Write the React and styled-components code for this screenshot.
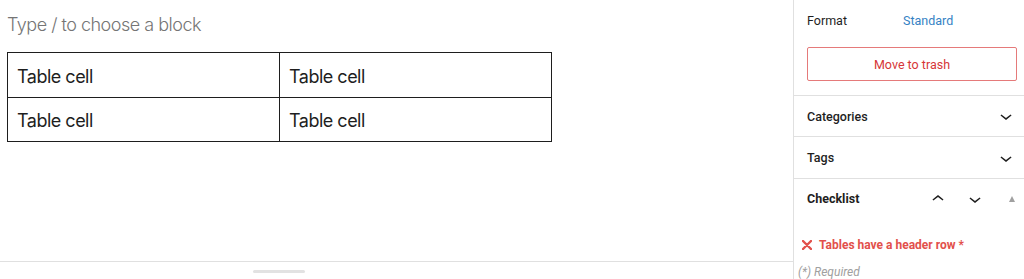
import React from "react";
import styled, { createGlobalStyle } from "styled-components";

const GlobalStyle = createGlobalStyle`
  html, body {
    margin: 0;
    padding: 0;
    background: #fff;
    overflow: hidden;
  }
  * { box-sizing: border-box; }
`;

const Page = styled.div`
  display: flex;
  width: 1024px;
  height: 279px;
  overflow: hidden;
`;

const Editor = styled.div`
  width: 793px;
  display: flex;
  flex-direction: column;
`;

const Canvas = styled.div`
  height: 262px;
  border-bottom: 1px solid #e0e0e0;
  padding: 13px 0 0 7px;
  font-family: Inter, "Noto Sans", sans-serif;
`;

const Placeholder = styled.div`
  font-size: 18px;
  line-height: 24px;
  font-weight: 300;
  color: #757575;
  letter-spacing: -0.5px;
`;

const Table = styled.table`
  margin-top: 15px;
  width: 545px;
  border-collapse: collapse;
  table-layout: fixed;
`;

const Cell = styled.td`
  border: 1px solid #1e1e1e;
  height: 44.5px;
  padding: 3px 9px 0;
  font-size: 18px;
  font-weight: 400;
  color: #1e1e1e;
  letter-spacing: -0.5px;
`;

const Footer = styled.div`
  flex: 1;
  padding: 8px 0 0 253px;
`;

const Handle = styled.div`
  width: 52px;
  height: 3px;
  border-radius: 2px;
  background: #e2e2e2;
`;

const Sidebar = styled.div`
  flex: 1;
  border-left: 1px solid #e0e0e0;
  font-family: Roboto, "Liberation Sans", Arial, sans-serif;
  font-size: 12.5px;
  color: #1e1e1e;
  display: flex;
  flex-direction: column;
`;

const Panel = styled.div`
  padding: 10px 7px 14px 13px;
  border-bottom: 1px solid #e0e0e0;
`;

const FormatRow = styled.div`
  display: flex;
  align-items: center;
  height: 20px;
  margin-bottom: 17px;
`;

const Label = styled.span`
  width: 96px;
`;

const LinkText = styled.span`
  color: #3582c4;
`;

const TrashButton = styled.div`
  height: 34px;
  border: 1px solid #e57a7a;
  border-radius: 2px;
  color: #d63638;
  display: flex;
  align-items: center;
  justify-content: center;
`;

const SectionHeader = styled.div`
  height: ${(p) => p.$h}px;
  display: flex;
  align-items: center;
  padding: 0 ${(p) => p.$pr}px 0 13px;
  border-bottom: ${(p) => (p.$noBorder ? "none" : "1px solid #e0e0e0")};
  font-weight: ${(p) => (p.$bold ? 700 : 500)};
`;

const Title = styled.span`
  flex: 1;
  font-weight: inherit;
`;

const IconSlot = styled.span`
  display: flex;
  align-items: center;
  justify-content: center;
  width: ${(p) => p.$w || 24}px;
  margin-left: ${(p) => p.$ml || 0}px;
  color: #1e1e1e;
`;

const Triangle = styled.span`
  width: 0;
  height: 0;
  border-left: 3.5px solid transparent;
  border-right: 3.5px solid transparent;
  border-bottom: 6px solid #a0a0a0;
`;

const Checklist = styled.div`
  padding: 18px 0 0 4px;
`;

const ErrorRow = styled.div`
  display: flex;
  align-items: center;
  gap: 7px;
  padding-left: 4px;
  color: #e2504b;
  font-weight: 700;
  font-size: 12px;
  height: 18px;
`;

const Required = styled.div`
  margin-top: 11px;
  font-style: italic;
  color: #a0a0a0;
  font-size: 12px;
`;

const ChevronDown = () => (
  <svg width="24" height="24" viewBox="0 0 24 24" fill="currentColor">
    <path d="M17.5 11.6L12 16l-5.5-4.4.9-1.2L12 14l4.6-3.6 1 1.2z" />
  </svg>
);

const ChevronUp = () => (
  <svg width="24" height="24" viewBox="0 0 24 24" fill="currentColor">
    <path d="M6.5 12.4L12 8l5.5 4.4-.9 1.2L12 10l-4.6 3.6-1-1.2z" />
  </svg>
);

const Cross = () => (
  <svg width="10" height="10" viewBox="0 0 10 10">
    <path
      d="M1 1L9 9M9 1L1 9"
      stroke="#e2504b"
      strokeWidth="2.4"
      strokeLinecap="round"
    />
  </svg>
);

export default function App() {
  return (
    <>
      <GlobalStyle />
      <Page>
        <Editor>
          <Canvas>
            <Placeholder>Type / to choose a block</Placeholder>
            <Table>
              <tbody>
                <tr>
                  <Cell>Table cell</Cell>
                  <Cell>Table cell</Cell>
                </tr>
                <tr>
                  <Cell>Table cell</Cell>
                  <Cell>Table cell</Cell>
                </tr>
              </tbody>
            </Table>
          </Canvas>
          <Footer>
            <Handle />
          </Footer>
        </Editor>
        <Sidebar>
          <Panel>
            <FormatRow>
              <Label>Format</Label>
              <LinkText>Standard</LinkText>
            </FormatRow>
            <TrashButton>Move to trash</TrashButton>
          </Panel>
          <SectionHeader $h={41} $pr={6}>
            <Title>Categories</Title>
            <IconSlot>
              <ChevronDown />
            </IconSlot>
          </SectionHeader>
          <SectionHeader $h={42} $pr={6}>
            <Title>Tags</Title>
            <IconSlot>
              <ChevronDown />
            </IconSlot>
          </SectionHeader>
          <SectionHeader $h={39} $pr={5} $bold $noBorder>
            <Title>Checklist</Title>
            <IconSlot>
              <ChevronUp />
            </IconSlot>
            <IconSlot $ml={13}>
              <ChevronDown />
            </IconSlot>
            <IconSlot $w={14} $ml={18}>
              <Triangle />
            </IconSlot>
          </SectionHeader>
          <Checklist>
            <ErrorRow>
              <Cross />
              Tables have a header row *
            </ErrorRow>
            <Required>(*) Required</Required>
          </Checklist>
        </Sidebar>
      </Page>
    </>
  );
}
